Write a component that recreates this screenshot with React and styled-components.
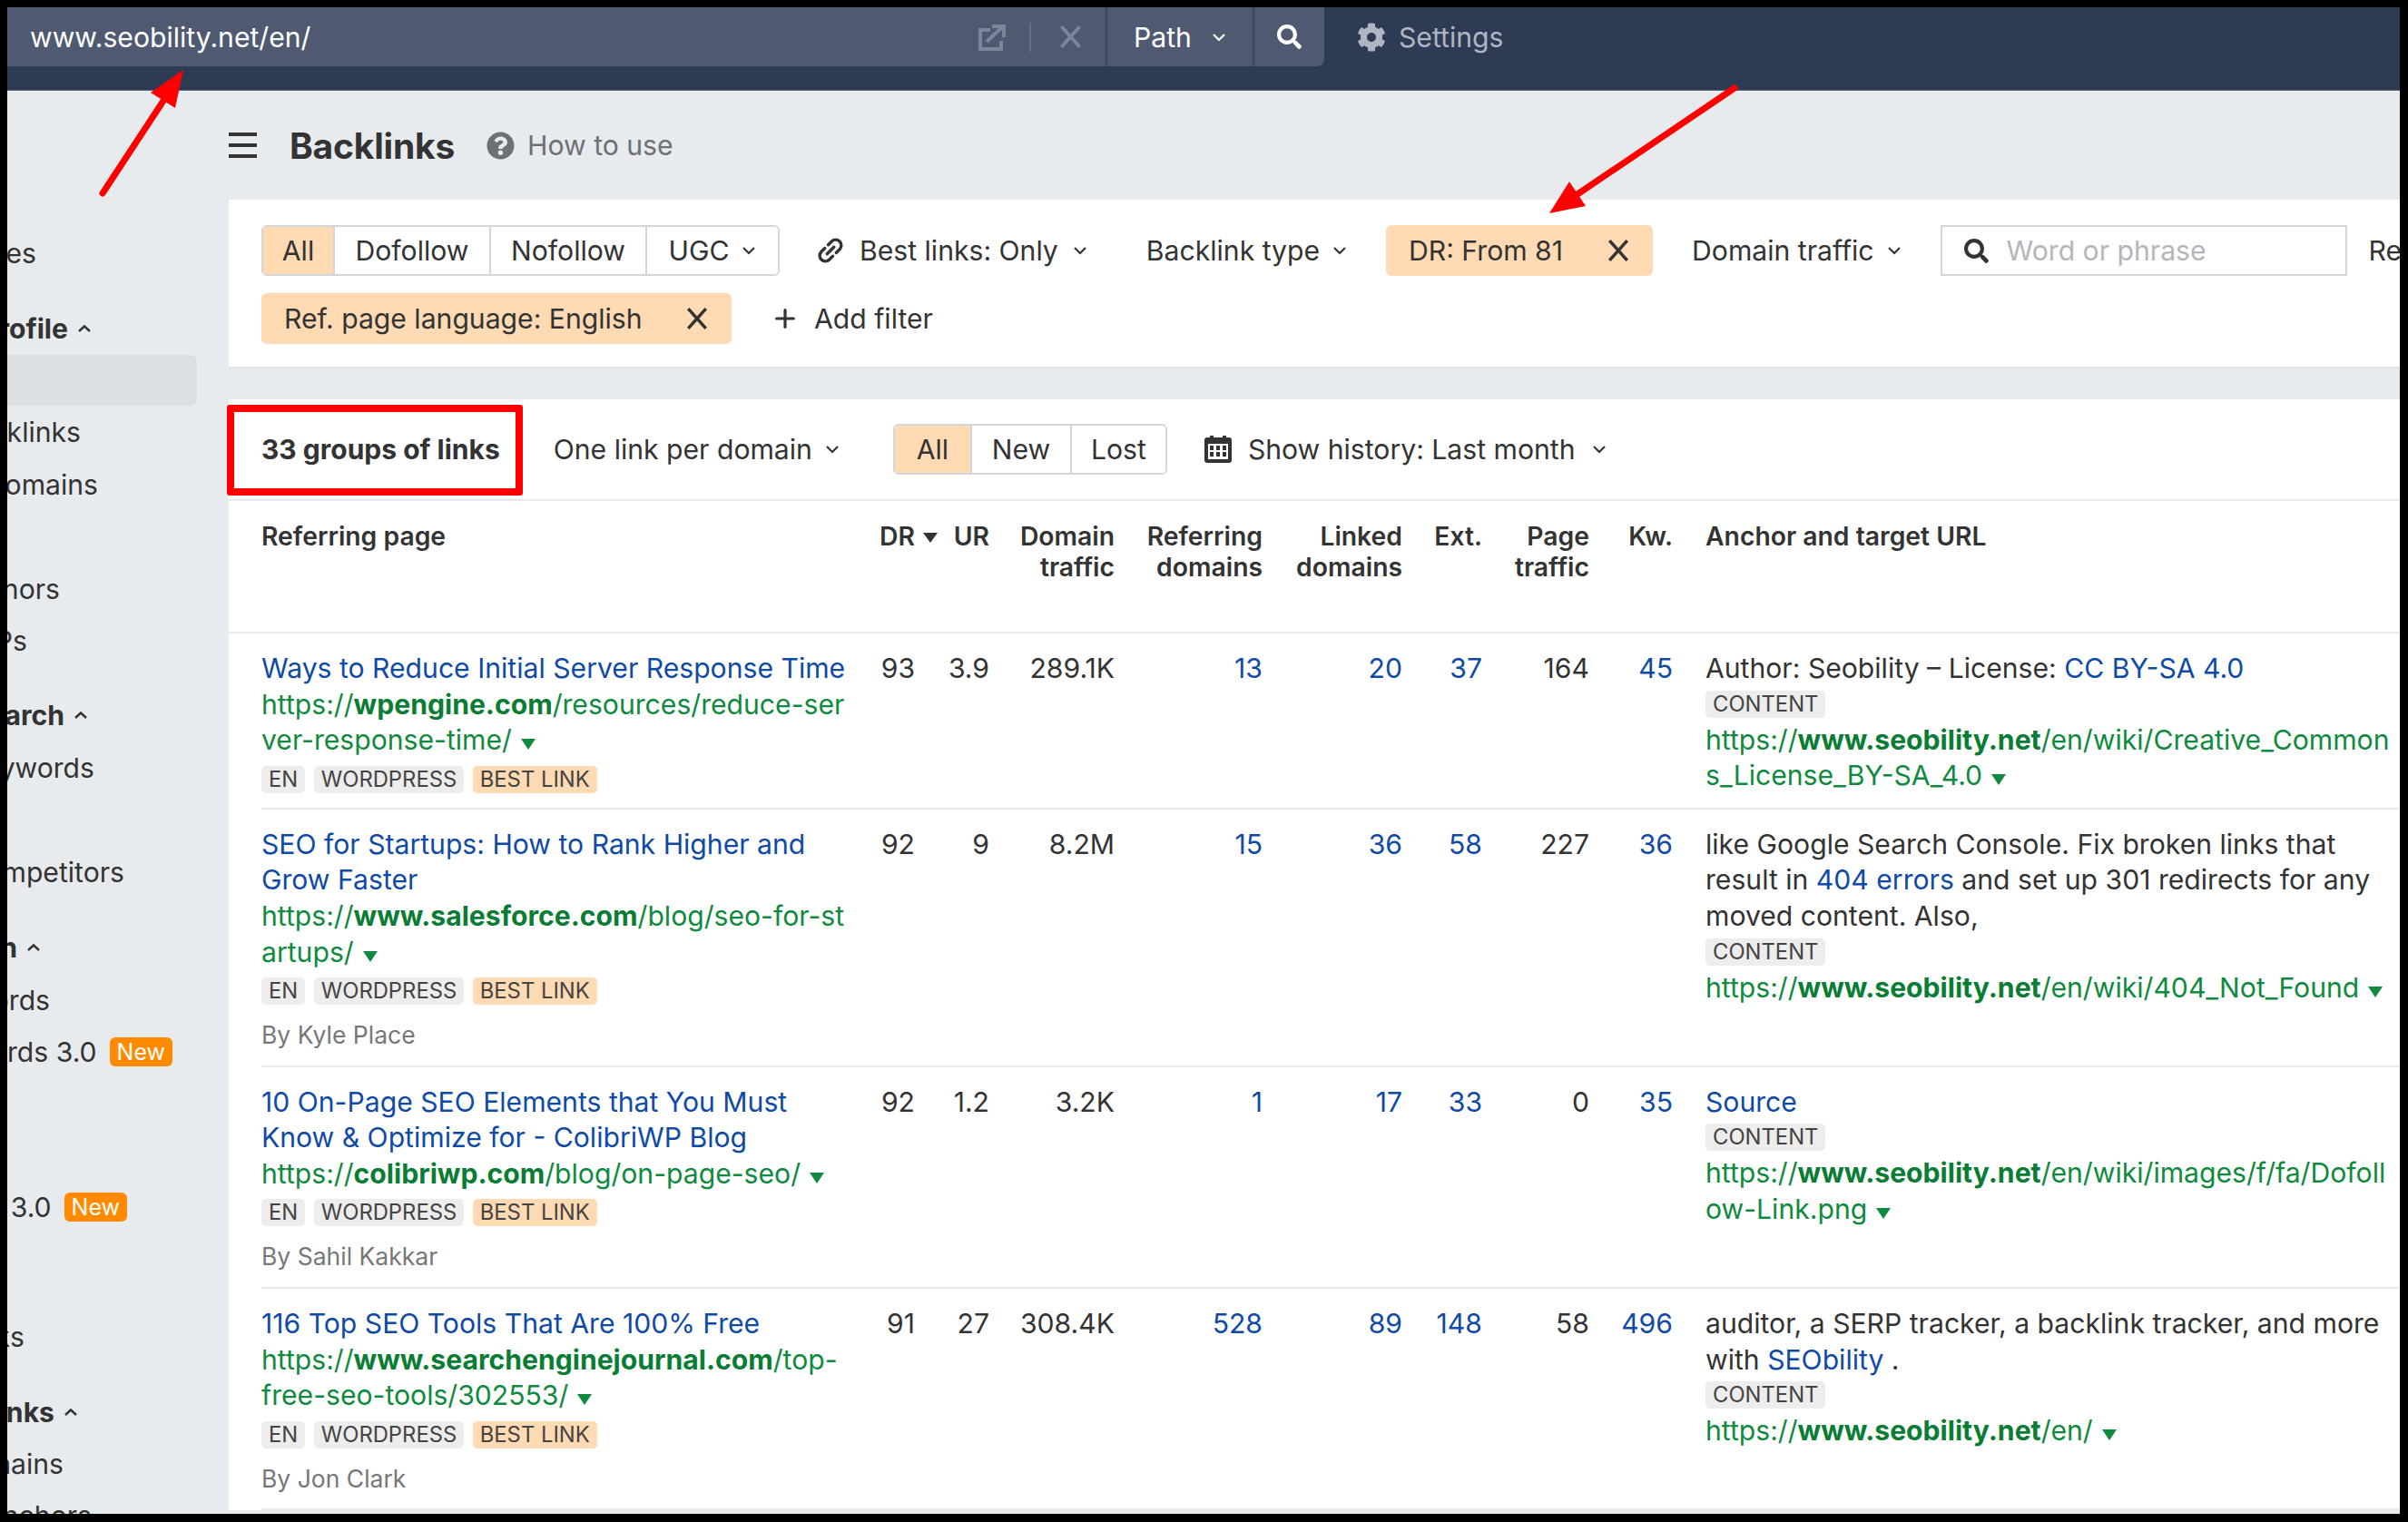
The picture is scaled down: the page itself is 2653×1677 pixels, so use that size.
import React from 'react';
import styled, { createGlobalStyle } from 'styled-components';
import { FaCog, FaSearch, FaQuestionCircle } from 'react-icons/fa';
import { Plus } from 'lucide-react';

const GlobalStyle = createGlobalStyle`
  html, body {
    margin: 0;
    background: #000;
  }
  body {
    font-family: Inter, "Liberation Sans", sans-serif;
    font-size: 30.15px;
    color: #333;
  }
`;

const Frame = styled.div`
  position: relative;
  margin: 8px 0 0 8px;
  width: 2636px;
  height: 1660px;
  overflow: hidden;
  background: #e8ebee;
`;

const TopNav = styled.header`
  display: flex;
  align-items: flex-start;
  height: 92px;
  background: #2e3b55;
  border-bottom: 1px solid #5a6478;
  box-sizing: border-box;
`;

const UrlGroup = styled.div`
  display: flex;
  align-items: stretch;
  width: 1451px;
  height: 65px;
  background: #4f5a72;
  border-radius: 0 0 8px 0;
  color: #fff;
`;

const UrlField = styled.div`
  display: flex;
  align-items: center;
  flex: 1;
  padding: 0 25px;
`;

const UrlText = styled.span`
  flex: 1;
`;

const UrlIcons = styled.div`
  display: flex;
  align-items: center;
`;

const UrlDivider = styled.span`
  width: 2px;
  height: 32px;
  margin: 0 30px 0 26px;
  background: #646e84;
`;

const NavSegment = styled.button`
  display: flex;
  align-items: center;
  justify-content: center;
  gap: 22px;
  width: ${(p) => p.$w}px;
  border: 0;
  border-left: 2px solid #3b4762;
  background: transparent;
  color: #fff;
  font: inherit;
`;

const SettingsLink = styled.div`
  display: flex;
  align-items: center;
  gap: 14px;
  height: 65px;
  margin-left: 36px;
  color: #b0b5c1;
`;

const Body = styled.div`
  display: grid;
  grid-template-columns: 244px 1fr;
`;

const Sidebar = styled.nav`
  height: 1568px;
  padding-top: 150px;
  box-sizing: border-box;
  overflow: hidden;
  background: #e8ebee;
`;

const SideItem = styled.div`
  display: flex;
  align-items: center;
  justify-content: flex-end;
  gap: 10px;
  width: ${(p) => p.$end - 8}px;
  height: 57.3px;
  margin-top: ${(p) => p.$top || 0}px;
  font-weight: ${(p) => (p.$head ? 700 : 400)};
  white-space: nowrap;
  & > svg {
    flex: none;
  }
`;

const SideActive = styled.div`
  width: 209px;
  height: 56px;
  border-radius: 0 8px 8px 0;
  background: #dcdfe2;
`;

const NewBadge = styled.span`
  flex: none;
  padding: 0 8px;
  height: 32px;
  margin-left: 4px;
  border-radius: 6px;
  background: #ff8a00;
  color: #fff;
  font-size: 25px;
  line-height: 32px;
`;

const Main = styled.main`
  min-width: 0;
`;

const TitleRow = styled.div`
  display: flex;
  align-items: center;
  height: 120px;
`;

const PageTitle = styled.h1`
  margin: 0 35px 0 36px;
  font-size: 39px;
  font-weight: 700;
  letter-spacing: -0.2px;
`;

const HowTo = styled.span`
  display: flex;
  align-items: center;
  gap: 14px;
  color: #6d7175;
`;

const FilterPanel = styled.section`
  display: flex;
  flex-direction: column;
  gap: 19px;
  height: 186px;
  box-sizing: border-box;
  padding: 28px 0 0 36px;
  background: #fff;
  border-bottom: 2px solid #e0e3e6;
`;

const FilterRow = styled.div`
  display: flex;
  align-items: center;
  gap: 21px;
  white-space: nowrap;
`;

const Segmented = styled.div`
  display: flex;
  flex: none;
  height: 56px;
  box-sizing: border-box;
  border: 2px solid #d3d5d8;
  border-radius: 6px;
  overflow: hidden;
`;

const SegButton = styled.button`
  display: flex;
  align-items: center;
  justify-content: center;
  gap: 14px;
  width: ${(p) => p.$w}px;
  box-sizing: border-box;
  border: 0;
  border-left: ${(p) => (p.$first ? 0 : '2px solid #d3d5d8')};
  background: ${(p) => (p.$on ? '#ffdab3' : '#fff')};
  color: #333;
  font: inherit;
`;

const Dropdown = styled.button`
  display: flex;
  flex: none;
  align-items: center;
  gap: ${(p) => p.$gap || 14}px;
  padding: 0 22px 0 ${(p) => p.$left || 22}px;
  height: 56px;
  border: 0;
  background: transparent;
  color: #333;
  font: inherit;
`;

const Chip = styled.div`
  display: flex;
  flex: none;
  align-items: center;
  justify-content: space-between;
  width: ${(p) => p.$w}px;
  height: 56px;
  box-sizing: border-box;
  padding: 0 25px;
  border-radius: 6px;
  background: #ffdab3;
`;

const SearchBox = styled.div`
  display: flex;
  flex: none;
  align-items: center;
  gap: 20px;
  width: 448px;
  height: 56px;
  box-sizing: border-box;
  padding: 0 24px;
  border: 2px solid #d3d5d8;
  color: #b4b6b9;
`;

const SearchGlyph = styled(FaSearch)`
  color: #333;
`;

const ClippedLabel = styled.span`
  padding-left: 3px;
`;

const ListPanel = styled.section`
  margin-top: 34px;
  background: #fff;
`;

const Toolbar = styled.div`
  position: relative;
  display: flex;
  align-items: center;
  height: 112px;
  padding-left: 36px;
  box-sizing: border-box;
  border-bottom: 2px solid #e8ebee;
  white-space: nowrap;
`;

const GroupCount = styled.strong`
  font-size: 30px;
  font-weight: 700;
  margin-right: 37px;
`;

const RedFrame = styled.div`
  position: absolute;
  left: -2px;
  top: 6px;
  width: 326px;
  height: 100px;
  box-sizing: border-box;
  border: 8px solid #f00;
  border-radius: 3px;
`;

const ToolSeg = styled(Segmented)`
  margin: 0 19px 0 37px;
`;

const HeadRow = styled.div`
  display: grid;
  grid-template-columns: 662px 83px 57px 138px 163px 154px 88px 118px 92px 1fr;
  height: 146px;
  box-sizing: border-box;
  padding: 22px 0 0 36px;
  border-bottom: 2px solid #e8ebee;
`;

const HeadCell = styled.div`
  font-size: 28.3px;
  font-weight: 600;
  line-height: 34px;
  text-align: ${(p) => (p.$left ? 'left' : 'right')};
  padding-left: ${(p) => (p.$anchor ? 36 : 0)}px;
`;

const SortArrow = styled.span`
  display: inline-block;
  margin-left: 9px;
  vertical-align: 3px;
  border-left: 8px solid transparent;
  border-right: 8px solid transparent;
  border-top: 11px solid #333;
`;

const DataRow = styled.div`
  display: grid;
  grid-template-columns: 662px 83px 57px 138px 163px 154px 88px 118px 92px 1fr;
  margin-left: 36px;
  padding: 19px 0 15px;
  line-height: 39.6px;
  border-bottom: 2px solid #e8ebee;
`;

const PageCell = styled.div`
  padding-right: 17px;
`;

const NumCell = styled.div`
  text-align: right;
  padding-right: ${(p) => p.$pad || 0}px;
  color: ${(p) => (p.$link ? '#0f4aa6' : '#333')};
`;

const AnchorCell = styled.div`
  padding: 0 8px 0 36px;
`;

const TitleLink = styled.a`
  color: #0f4aa6;
`;

const UrlLine = styled.div`
  color: #0f8a3e;
  word-break: break-all;
`;

const UrlHost = styled.b`
  color: #0a7d35;
  font-weight: 700;
`;

const Caret = styled.span`
  display: inline-block;
  margin-left: 10px;
  vertical-align: 0;
  border-left: 8px solid transparent;
  border-right: 8px solid transparent;
  border-top: 12px solid #0f8a3e;
`;

const TagRow = styled.div`
  display: flex;
  gap: 9.5px;
  margin-top: 8px;
`;

const Tag = styled.span`
  height: 30px;
  padding: 0 8px;
  border-radius: 5px;
  background: ${(p) => (p.$best ? '#ffdab3' : '#ededed')};
  font-size: 23.8px;
  line-height: 30px;
  color: #444;
`;

const AnchorTag = styled(Tag)`
  display: table;
  margin: 4px 0 5px;
`;

const Author = styled.div`
  margin: 20px 0 5px;
  font-size: 26.5px;
  line-height: 26.5px;
  color: #777;
`;

const Annotations = styled.svg`
  position: absolute;
  left: -8px;
  top: -8px;
  pointer-events: none;
`;

const CloseIcon = ({ size = 26, color = '#333', width = 3.2 }) => (
  <svg width={size} height={size} viewBox="0 0 24 24" fill="none" stroke={color} strokeWidth={width}>
    <path d="M3 2 L21 22 M21 2 L3 22" />
  </svg>
);

const Chevron = ({ color = '#333' }) => (
  <svg width="16" height="10" viewBox="0 0 16 10" fill="none" stroke={color} strokeWidth="2.2">
    <path d="M2 2 L8 8 L14 2" />
  </svg>
);

const ChevronUp = () => (
  <svg width="16" height="10" viewBox="0 0 16 10" fill="none" stroke="#333" strokeWidth="2.4">
    <path d="M2 8 L8 2.5 L14 8" />
  </svg>
);

const Hamburger = () => (
  <svg width="31" height="28" viewBox="0 0 31 28" fill="#333">
    <rect y="0" width="31" height="4" />
    <rect y="12" width="31" height="4" />
    <rect y="24" width="31" height="4" />
  </svg>
);

const OpenIcon = () => (
  <svg width="30" height="30" viewBox="0 0 30 30" fill="none" stroke="#7d8598" strokeWidth="4">
    <path d="M13 7 H2 V28 H25 V19" />
    <path d="M9 20 L26 4" />
    <path d="M15 3 H28 V15" />
  </svg>
);

const ChainIcon = () => (
  <svg width="32" height="32" viewBox="0 0 36 36" fill="none" stroke="#333" strokeWidth="3.8" strokeLinecap="round">
    <g transform="rotate(-45 18 18)">
      <path d="M15 11 H9 a7 7 0 0 0 0 14 H15" />
      <path d="M21 11 H27 a7 7 0 0 1 0 14 H21" />
      <path d="M12 18 H24" />
    </g>
  </svg>
);

const CalendarIcon = () => (
  <svg width="30" height="30" viewBox="0 0 30 30">
    <rect x="0" y="2" width="30" height="28" rx="3" fill="#333" />
    <rect x="6" y="0" width="4" height="5" fill="#333" />
    <rect x="20" y="0" width="4" height="5" fill="#333" />
    <rect x="4" y="9" width="22" height="17" fill="#fff" />
    {[6, 13, 20].map((x) => [11, 18].map((y) => (
      <rect key={`${x}-${y}`} x={x} y={y} width="4" height="5" fill="#333" />
    )))}
  </svg>
);

const sideItems = [
  { text: 'Top pages', end: 40 },
  { text: 'Backlink profile', end: 101, head: true, top: 26 },
  { active: true },
  { text: 'Backlinks', end: 89, top: 1 },
  { text: 'Referring domains', end: 108 },
  { text: 'Anchors', end: 66, top: 58 },
  { text: 'Referring IPs', end: 30 },
  { text: 'Organic search', end: 97, head: true, top: 25 },
  { text: 'Organic keywords', end: 104 },
  { text: 'Competitors', end: 137, top: 58 },
  { text: 'Paid search', end: 45, head: true, top: 26 },
  { text: 'PPC keywords', end: 55 },
  { text: 'Organic keywords 3.0', end: 190, badge: true },
  { text: 'Pages 3.0', end: 140, top: 114, badge: true },
  { text: 'Broken links', end: 27, top: 85 },
  { text: 'Outgoing links', end: 86, head: true, top: 26 },
  { text: 'Linked domains', end: 70 },
  { text: 'Anchors', end: 101 },
];

const rows = [
  {
    title: 'Ways to Reduce Initial Server Response Time',
    url: ['wpengine.com', '/resources/reduce-server-response-time/'],
    nums: ['93', '3.9', '289.1K', '13', '20', '37', '164', '45'],
    anchor: <>Author: Seobility – License: <TitleLink>CC BY-SA 4.0</TitleLink></>,
    target: ['www.seobility.net', '/en/wiki/Creative_Commons_License_BY-SA_4.0'],
  },
  {
    title: 'SEO for Startups: How to Rank Higher and Grow Faster',
    url: ['www.salesforce.com', '/blog/seo-for-startups/'],
    author: 'By Kyle Place',
    nums: ['92', '9', '8.2M', '15', '36', '58', '227', '36'],
    anchor: <>like Google Search Console. Fix broken links that result in <TitleLink>404 errors</TitleLink> and set up 301 redirects for any moved content. Also,</>,
    target: ['www.seobility.net', '/en/wiki/404_Not_Found'],
  },
  {
    title: '10 On-Page SEO Elements that You Must Know & Optimize for - ColibriWP Blog',
    url: ['colibriwp.com', '/blog/on-page-seo/'],
    author: 'By Sahil Kakkar',
    nums: ['92', '1.2', '3.2K', '1', '17', '33', '0', '35'],
    anchor: <TitleLink>Source</TitleLink>,
    target: ['www.seobility.net', '/en/wiki/images/f/fa/Dofollow-Link.png'],
  },
  {
    title: '116 Top SEO Tools That Are 100% Free',
    url: ['www.searchenginejournal.com', '/top-free-seo-tools/302553/'],
    author: 'By Jon Clark',
    nums: ['91', '27', '308.4K', '528', '89', '148', '58', '496'],
    anchor: <>auditor, a SERP tracker, a backlink tracker, and more with <TitleLink>SEObility</TitleLink> .</>,
    target: ['www.seobility.net', '/en/'],
  },
];

const headers = [
  ['DR'], ['UR'], ['Domain', 'traffic'], ['Referring', 'domains'], ['Linked', 'domains'], ['Ext.'], ['Page', 'traffic'], ['Kw.'],
];

const linkedCols = [3, 4, 5, 7];

const LinkUrl = ({ parts }) => (
  <UrlLine>
    https://<UrlHost>{parts[0]}</UrlHost>{parts[1]}<Caret />
  </UrlLine>
);

const App = () => (
  <>
    <GlobalStyle />
    <Frame>
      <TopNav>
        <UrlGroup>
          <UrlField>
            <UrlText>www.seobility.net/en/</UrlText>
            <UrlIcons>
              <OpenIcon />
              <UrlDivider />
              <CloseIcon size={27} color="#7d8598" width={3.4} />
            </UrlIcons>
          </UrlField>
          <NavSegment $w={162}>Path <Chevron color="#fff" /></NavSegment>
          <NavSegment $w={79}><FaSearch size={27} /></NavSegment>
        </UrlGroup>
        <SettingsLink><FaCog size={32} />Settings</SettingsLink>
      </TopNav>
      <Body>
        <Sidebar>
          {sideItems.map((item, i) => item.active ? (
            <SideActive key={i} />
          ) : (
            <SideItem key={i} $end={item.end} $head={item.head} $top={item.top}>
              {item.text}
              {item.head && <ChevronUp />}
              {item.badge && <NewBadge>New</NewBadge>}
            </SideItem>
          ))}
        </Sidebar>
        <Main>
          <TitleRow>
            <Hamburger />
            <PageTitle>Backlinks</PageTitle>
            <HowTo><FaQuestionCircle size={31} />How to use</HowTo>
          </TitleRow>
          <FilterPanel>
            <FilterRow>
              <Segmented>
                <SegButton $w={77} $on $first>All</SegButton>
                <SegButton $w={172}>Dofollow</SegButton>
                <SegButton $w={172}>Nofollow</SegButton>
                <SegButton $w={146}>UGC <Chevron /></SegButton>
              </Segmented>
              <Dropdown $gap={16} $left={19}><ChainIcon />Best links: Only <Chevron /></Dropdown>
              <Dropdown>Backlink type <Chevron /></Dropdown>
              <Chip $w={294}>DR: From 81 <CloseIcon /></Chip>
              <Dropdown>Domain traffic <Chevron /></Dropdown>
              <SearchBox><SearchGlyph size={27} />Word or phrase</SearchBox>
              <ClippedLabel>Referring page</ClippedLabel>
            </FilterRow>
            <FilterRow>
              <Chip $w={518}>Ref. page language: English <CloseIcon /></Chip>
              <Dropdown $gap={16}><Plus size={32} strokeWidth={2.4} />Add filter</Dropdown>
            </FilterRow>
          </FilterPanel>
          <ListPanel>
            <Toolbar>
              <RedFrame />
              <GroupCount>33 groups of links</GroupCount>
              <Dropdown as="span">One link per domain <Chevron /></Dropdown>
              <ToolSeg>
                <SegButton $w={83} $on $first>All</SegButton>
                <SegButton $w={110}>New</SegButton>
                <SegButton $w={105}>Lost</SegButton>
              </ToolSeg>
              <Dropdown $gap={18}><CalendarIcon />Show history: Last month <Chevron /></Dropdown>
            </Toolbar>
            <HeadRow>
              <HeadCell $left>Referring page</HeadCell>
              {headers.map((lines, i) => (
                <HeadCell key={i}>
                  {lines[0]}
                  {i === 0 && <SortArrow />}
                  {lines[1] && <br />}
                  {lines[1]}
                </HeadCell>
              ))}
              <HeadCell $left $anchor>Anchor and target URL</HeadCell>
            </HeadRow>
            {rows.map((row) => (
              <DataRow key={row.title}>
                <PageCell>
                  <TitleLink>{row.title}</TitleLink>
                  <LinkUrl parts={row.url} />
                  <TagRow>
                    <Tag>EN</Tag>
                    <Tag>WORDPRESS</Tag>
                    <Tag $best>BEST LINK</Tag>
                  </TagRow>
                  {row.author && <Author>{row.author}</Author>}
                </PageCell>
                {row.nums.map((n, i) => (
                  <NumCell key={i} $link={linkedCols.includes(i)} $pad={i === 0 ? 25 : 0}>{n}</NumCell>
                ))}
                <AnchorCell>
                  {row.anchor}
                  <AnchorTag>CONTENT</AnchorTag>
                  <LinkUrl parts={row.target} />
                </AnchorCell>
              </DataRow>
            ))}
          </ListPanel>
        </Main>
      </Body>
      <Annotations width="2653" height="1677" viewBox="0 0 2653 1677">
        <line x1="113" y1="213" x2="182" y2="108" stroke="#f00" strokeWidth="7" strokeLinecap="round" />
        <polygon points="202,77 193,119 166,102" fill="#f00" />
        <line x1="1911" y1="97" x2="1735" y2="216" stroke="#f00" strokeWidth="7" strokeLinecap="round" />
        <polygon points="1707,235 1729,200 1747,227" fill="#f00" />
      </Annotations>
    </Frame>
  </>
);

export default App;
